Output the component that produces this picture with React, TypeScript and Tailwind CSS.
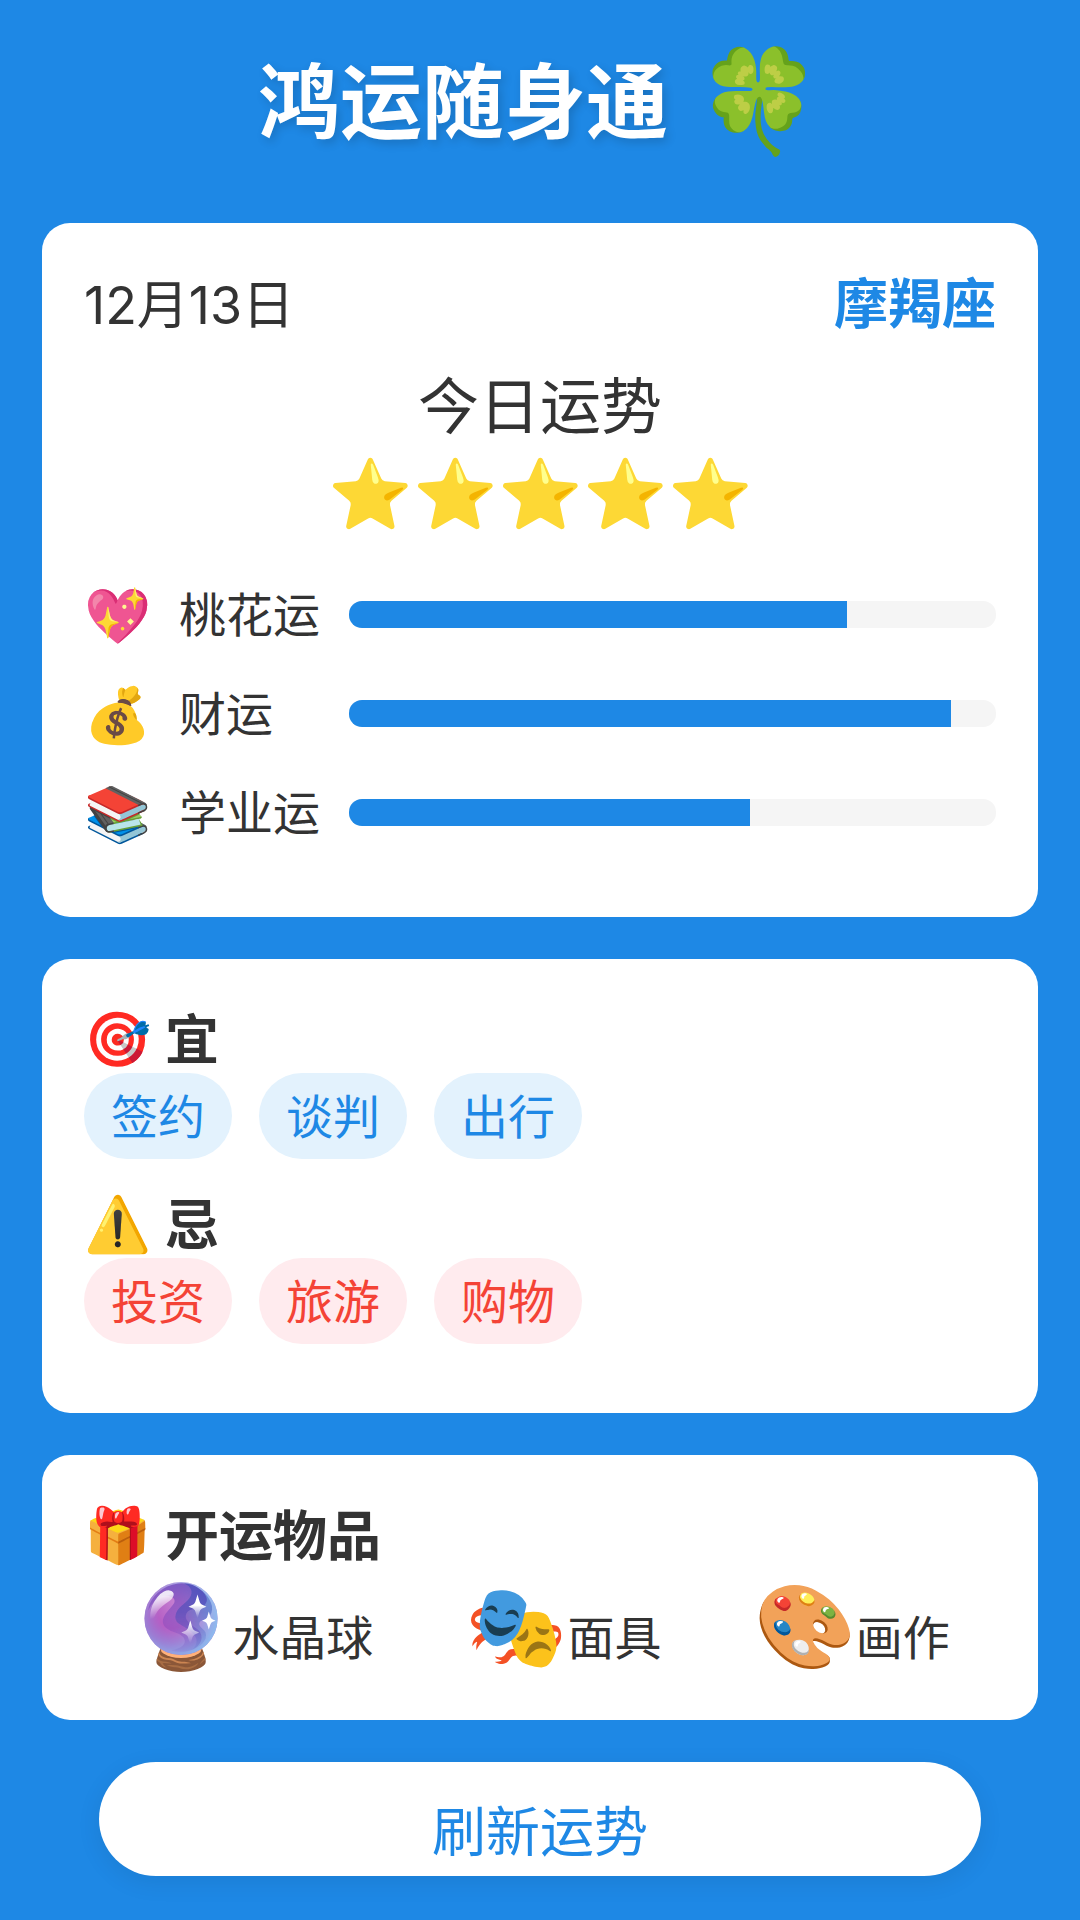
import type { ReactNode } from "react";

const levels = [
  { icon: "💖", label: "桃花运", value: 77 },
  { icon: "💰", label: "财运", value: 93 },
  { icon: "📚", label: "学业运", value: 62 },
];

const goodFor = ["签约", "谈判", "出行"];
const avoid = ["投资", "旅游", "购物"];

const luckyItems = [
  { icon: "🔮", label: "水晶球" },
  { icon: "🎭", label: "面具" },
  { icon: "🎨", label: "画作" },
];

function Card({ children }: { children: ReactNode }) {
  return <section className="rounded-[28px] bg-white p-[42px]">{children}</section>;
}

function Heading({ icon, children }: { icon: string; children: ReactNode }) {
  return (
    <h2 className="flex h-[72px] items-start gap-[14px] text-[54px] font-bold">
      <span aria-hidden="true" className="leading-[68px] font-normal">{icon}</span>
      <span className="leading-[72px]">{children}</span>
    </h2>
  );
}

function Tags({ items, className }: { items: string[]; className: string }) {
  return (
    <ul className="mb-[27px] flex flex-wrap gap-[27px]">
      {items.map((item) => (
        <li key={item} className={`rounded-full px-[27px] pt-[7px] pb-[11px] text-[47px] leading-[68px] ${className}`}>
          {item}
        </li>
      ))}
    </ul>
  );
}

export default function App() {
  return (
    <main className="flex min-h-screen flex-col gap-[42px] bg-[#1e88e5] px-[42px] pt-[42px] pb-[44px] font-['Noto_Sans_CJK_SC',sans-serif] text-[#333333]">
      <header className="mb-[29px] flex h-[110px] items-start justify-center gap-[28px] text-white">
        <h1 className="text-[82px] leading-[110px] font-bold [text-shadow:3px_4px_10px_rgba(0,0,0,0.16)]">鸿运随身通</h1>
        <span aria-hidden="true" className="text-[101px] leading-[100px]">🍀</span>
      </header>

      <Card>
        <div className="mb-[18px] flex items-baseline justify-between leading-[72px]">
          <time className="font-[Inter,'Noto_Sans_CJK_SC',sans-serif] text-[52px]">12月13日</time>
          <span className="text-[54px] font-bold text-[#1e88e5]">摩羯座</span>
        </div>
        <div className="mb-[46px] text-center">
          <h2 className="text-[61px] leading-[86px]">今日运势</h2>
          <p aria-label="五星" className="text-[68px] leading-[86px]">⭐⭐⭐⭐⭐</p>
        </div>
        {levels.map(({ icon, label, value }) => (
          <div key={label} className="mb-[27px] flex h-[72px] items-center">
            <span aria-hidden="true" className="mr-[28px] pb-1 text-[54px] leading-[68px]">{icon}</span>
            <span className="mr-[28px] w-[142px] pb-1 text-[47px] leading-[70px] whitespace-nowrap">{label}</span>
            <div
              role="progressbar"
              aria-label={label}
              aria-valuenow={value}
              aria-valuemin={0}
              aria-valuemax={100}
              className="h-[27px] flex-1 overflow-hidden rounded-[13px] bg-[#f5f5f5]"
            >
              <div className="h-full bg-[#1e88e5]" style={{ width: `${value}%` }} />
            </div>
          </div>
        ))}
      </Card>

      <Card>
        <Heading icon="🎯">宜</Heading>
        <Tags items={goodFor} className="bg-[#e3f2fd] text-[#1e88e5]" />
        <Heading icon="⚠️">忌</Heading>
        <Tags items={avoid} className="bg-[#ffebee] text-[#f44336]" />
      </Card>

      <Card>
        <Heading icon="🎁">开运物品</Heading>
        <ul className="flex h-[109px] justify-around">
          {luckyItems.map(({ icon, label }) => (
            <li key={label} className="flex items-baseline text-[47px] leading-[102px]">
              <span aria-hidden="true" className="text-[82px]">{icon}</span>
              <span>{label}</span>
            </li>
          ))}
        </ul>
      </Card>

      <button
        type="button"
        className="mx-[57px] rounded-full bg-white pt-[27px] pb-[7px] text-[54px] leading-[80px] text-[#1e88e5] shadow-[0_6px_24px_rgba(0,0,0,0.08)]"
      >
        刷新运势
      </button>
    </main>
  );
}
